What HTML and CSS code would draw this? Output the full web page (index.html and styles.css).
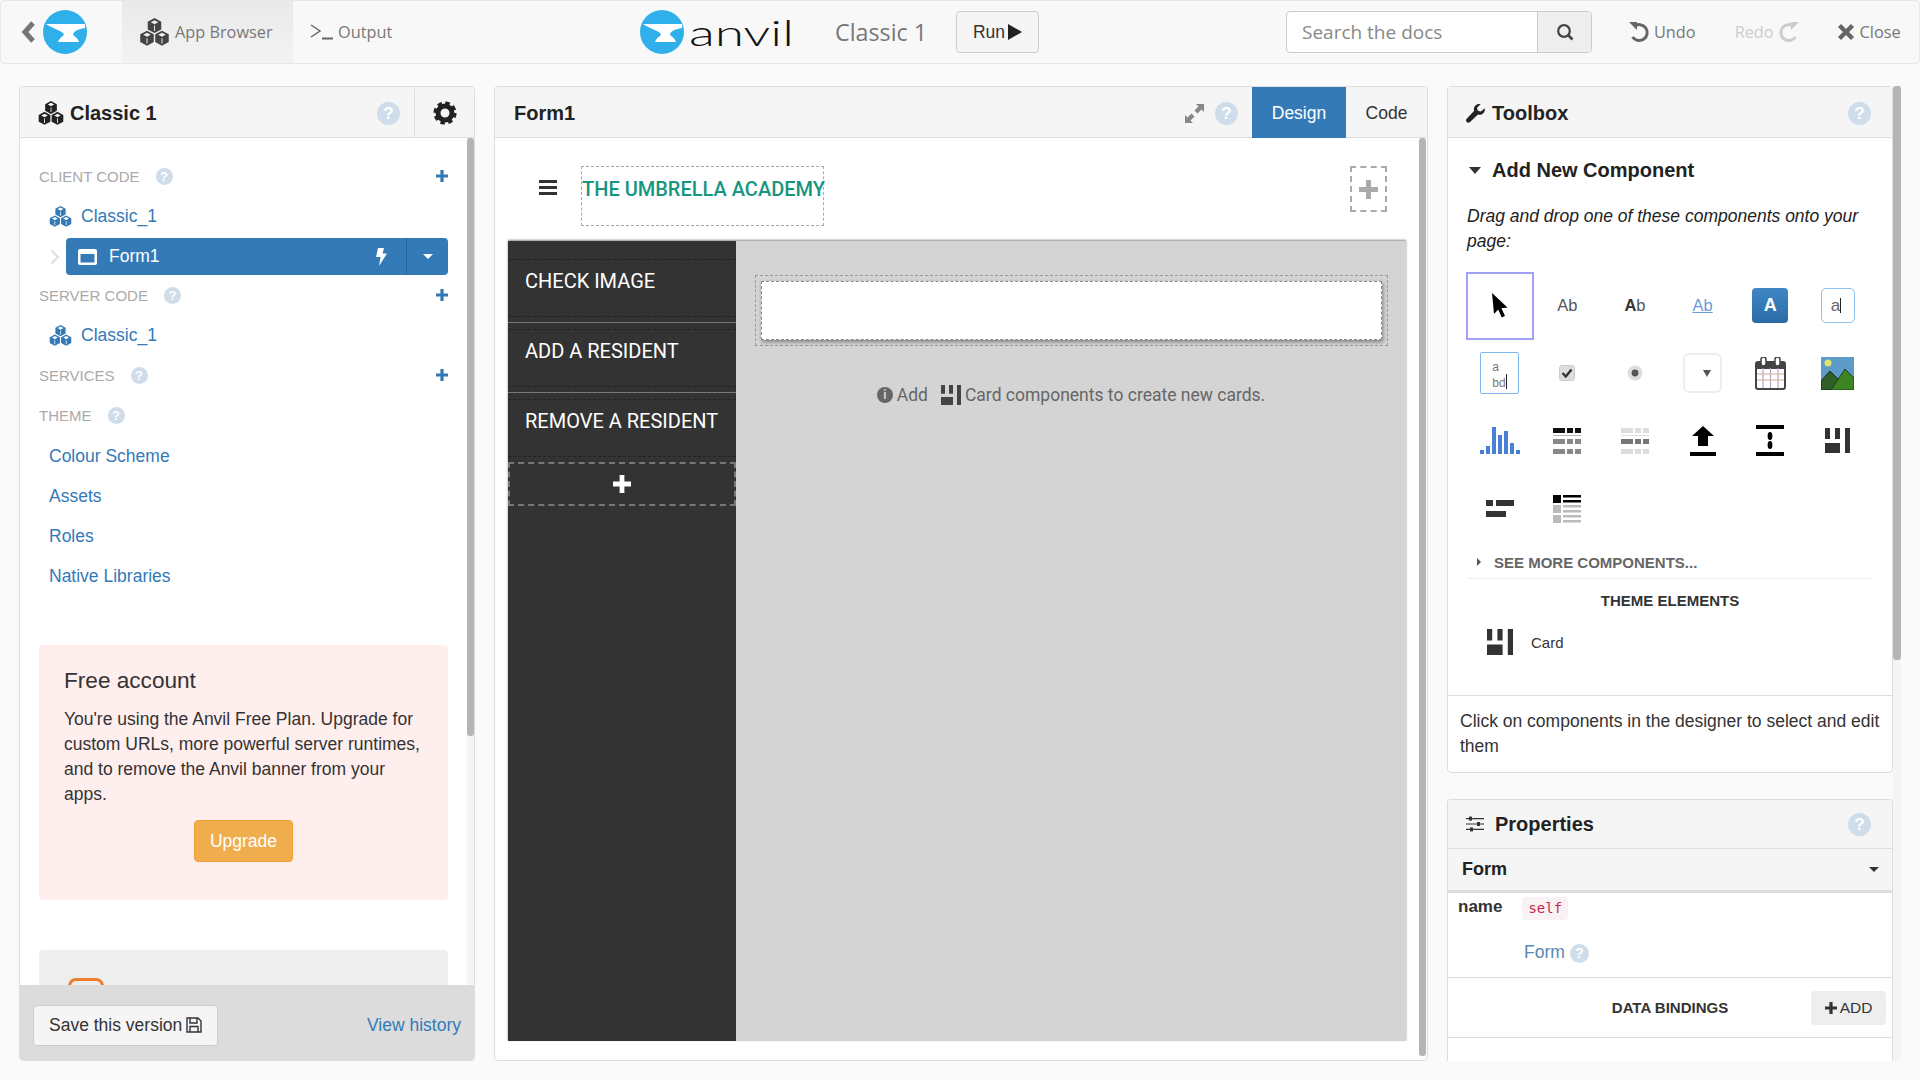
FILE: index.html
```html
<!DOCTYPE html>
<html>
<head>
<meta name="viewport" content="width=device-width, initial-scale=1">
<title>Anvil Editor</title>
<link rel="stylesheet" href="styles.css">
</head>
<body>

<svg class="defs" width="0" height="0">
  <symbol id="i-cubes" viewBox="0 0 24 23">
    <path id="cube" fill-rule="evenodd" d="M12 0L17.6 3V9.4L12 12.4L6.4 9.4V3ZM12 1.7L8.9 3.4L12 5.1L15.1 3.4ZM11.6 6.2V10.6H12.4V6.2Z"/>
    <use href="#cube" x="-6.2" y="10.4"/>
    <use href="#cube" x="6.2" y="10.4"/>
  </symbol>
  <symbol id="i-anvil" viewBox="0 0 44 44">
    <circle cx="22" cy="22" r="22" fill="#2fb0ea"/>
    <path fill="#fff" d="M3 14H42V18C36 19 31 21 30 24L31 26C33 27 35 29 36 32H15C16 29 18 27 20 26L21 24C18 20 10 19 3 14Z"/>
  </symbol>
  <symbol id="i-plus" viewBox="0 0 12 12">
    <path d="M4.4 0H7.6V4.4H12V7.6H7.6V12H4.4V7.6H0V4.4H4.4Z"/>
  </symbol>
  <symbol id="i-card" viewBox="0 0 25 25">
    <path d="M0 0H5V11H0ZM10 0H15V11H10ZM0 15H15V25H0ZM20 0H25V25H20Z"/>
  </symbol>
</svg>

<header class="topbar">
  <a class="back">
    <svg width="14" height="24" viewBox="0 0 14 24"><path d="M12 3L4 12L12 21" fill="none" stroke="#777" stroke-width="5"/></svg>
    <svg class="back-logo" width="44" height="44"><use href="#i-anvil"/></svg>
  </a>
  <a class="tab tab-active">
    <svg class="tab-cubes" width="29" height="28"><use href="#i-cubes"/></svg>
    App Browser
  </a>
  <a class="tab tab-output">
    <svg width="24" height="16" viewBox="0 0 24 16"><path d="M1 1L10 7L1 13" fill="none" stroke="#666" stroke-width="1.5"/><path d="M12 14.5H23" stroke="#666" stroke-width="2"/></svg>
    Output
  </a>
  <div class="brand">
    <svg width="44" height="44"><use href="#i-anvil"/></svg>
    <span class="wordmark">anvil</span>
  </div>
  <div class="app-name">Classic 1</div>
  <button class="run-btn">Run
    <svg width="14" height="16" viewBox="0 0 14 16"><path d="M0 0L14 8L0 16Z" fill="#222"/></svg>
  </button>
  <div class="search">
    <span class="search-input">Search the docs</span>
    <span class="search-btn">
      <svg width="18" height="18" viewBox="0 0 18 18"><circle cx="8" cy="8" r="5.8" fill="none" stroke="#444" stroke-width="2.2"/><path d="M12 12L16.5 16.5" stroke="#444" stroke-width="2.6"/></svg>
    </span>
  </div>
  <a class="tool tool-undo">
    <svg width="22" height="22" viewBox="0 0 22 22"><path d="M6 5.5A8 8 0 1 1 4.5 16" fill="none" stroke="#666" stroke-width="3"/><path d="M1 1H9V9Z" fill="#666"/></svg>
    Undo
  </a>
  <a class="tool tool-redo">
    Redo
    <svg width="22" height="22" viewBox="0 0 22 22"><path d="M16 5.5A8 8 0 1 0 17.5 16" fill="none" stroke="#ccc" stroke-width="3"/><path d="M21 1H13V9Z" fill="#ccc"/></svg>
  </a>
  <a class="tool tool-close">
    <svg width="18" height="18" viewBox="0 0 18 18"><path d="M2.5 2.5L15.5 15.5M15.5 2.5L2.5 15.5" stroke="#666" stroke-width="4.4"/></svg>
    Close
  </a>
</header>

<main class="workspace">

  <!-- app browser -->
  <section class="panel panel-left">
    <div class="panel-head">
      <svg class="head-cubes" width="26" height="24"><use href="#i-cubes"/></svg>
      <span class="head-title">Classic 1</span>
      <span class="help help-big help-push">?</span>
      <span class="gear-box">
        <svg width="24" height="24" viewBox="0 0 24 24"><circle cx="12" cy="12" r="7" fill="none" stroke="#222" stroke-width="5"/><circle cx="12" cy="12" r="9.6" fill="none" stroke="#222" stroke-width="4" stroke-dasharray="4.3 3.24"/></svg>
      </span>
    </div>
    <div class="scroll-row left-scroll">
      <div class="left-body">
        <div class="sec-row sec-first">CLIENT CODE <span class="help help-small">?</span><svg class="sec-plus" width="12" height="12"><use href="#i-plus"/></svg></div>
        <a class="file-row"><svg width="23" height="21"><use href="#i-cubes"/></svg>Classic_1</a>
        <div class="form-line">
          <svg class="form-chev" width="10" height="16" viewBox="0 0 10 16"><path d="M1.5 1.5L8 8L1.5 14.5" fill="none" stroke="#ddd" stroke-width="2"/></svg>
          <a class="form-pill">
            <svg width="19" height="16" viewBox="0 0 19 16"><path fill="#fff" fill-rule="evenodd" d="M2 0H17A2 2 0 0 1 19 2V14A2 2 0 0 1 17 16H2A2 2 0 0 1 0 14V2A2 2 0 0 1 2 0ZM2.5 5V13.5H16.5V5Z"/></svg>
            <span class="pill-name">Form1</span>
            <svg class="pill-bolt" width="11" height="18" viewBox="0 0 11 18"><path fill="#fff" d="M2 0H8L6.6 5.5H11L3 18L4.6 9H0Z"/></svg>
            <span class="pill-drop"><i class="caret caret-white"></i></span>
          </a>
        </div>
        <div class="sec-row">SERVER CODE <span class="help help-small">?</span><svg class="sec-plus" width="12" height="12"><use href="#i-plus"/></svg></div>
        <a class="file-row"><svg width="23" height="21"><use href="#i-cubes"/></svg>Classic_1</a>
        <div class="sec-row">SERVICES <span class="help help-small">?</span><svg class="sec-plus" width="12" height="12"><use href="#i-plus"/></svg></div>
        <div class="sec-row">THEME <span class="help help-small">?</span></div>
        <a class="theme-row">Colour Scheme</a>
        <a class="theme-row">Assets</a>
        <a class="theme-row">Roles</a>
        <a class="theme-row">Native Libraries</a>

        <div class="promo">
          <h3>Free account</h3>
          <p>You're using the Anvil Free Plan. Upgrade for custom URLs, more powerful server runtimes, and to remove the Anvil banner from your apps.</p>
          <button class="upgrade">Upgrade</button>
        </div>
        <div class="promo-grey"><span class="orange-bit"></span></div>
      </div>
      <div class="scrollbar"><div class="thumb left-thumb"></div></div>
    </div>
    <div class="left-foot">
      <button class="save-btn">Save this version
        <svg width="16" height="16" viewBox="0 0 16 16"><path fill="none" stroke="#333" stroke-width="1.4" d="M1 1H12L15 4V15H1ZM4 1V6H11V1M4 15V9.5H12V15"/></svg>
      </button>
      <a class="history">View history</a>
    </div>
  </section>

  <!-- designer -->
  <section class="panel panel-mid">
    <div class="panel-head">
      <span class="head-title head-form">Form1</span>
      <svg class="expand" width="19" height="19" viewBox="0 0 19 19"><path fill="#888" d="M11 0H19V8L16.500 5.500L12.500 9.500L9.500 6.500L13.500 2.500ZM8 19H0V11L2.500 13.500L6.500 9.500L9.500 12.500L5.500 16.500Z"/></svg>
      <span class="help help-big help-form">?</span>
      <a class="mode mode-on">Design</a>
      <a class="mode">Code</a>
    </div>
    <div class="scroll-row">
      <div class="form-wrap">
        <div class="form-top">
          <div class="burger"><i></i><i></i><i></i></div>
          <div class="form-title">THE UMBRELLA ACADEMY</div>
          <div class="top-slot"><svg width="19" height="19" fill="#aaa"><use href="#i-plus"/></svg></div>
        </div>
        <div class="form-main">
          <nav class="sidenav">
            <div class="nav-slot"><a class="nav-link">CHECK IMAGE</a></div>
            <div class="nav-slot"><a class="nav-link">ADD A RESIDENT</a></div>
            <div class="nav-slot nav-last"><a class="nav-link">REMOVE A RESIDENT</a></div>
            <div class="nav-add"><svg width="18" height="18" fill="#fff"><use href="#i-plus"/></svg></div>
          </nav>
          <div class="stage">
            <div class="card-slot"><div class="card-box"></div></div>
            <div class="hint">
              <span class="info">i</span> Add
              <svg class="hint-card" width="20" height="20" fill="#444"><use href="#i-card"/></svg>
              Card components to create new cards.
            </div>
          </div>
        </div>
      </div>
      <div class="scrollbar scrollbar-mid"><div class="thumb mid-thumb"></div></div>
    </div>
  </section>

  <!-- toolbox and properties -->
  <div class="right-col">
    <div class="right-stack">
      <section class="panel panel-tools">
        <div class="panel-head">
          <svg class="wrench" width="19" height="19" viewBox="0 0 19 19"><path fill="#222" d="M18.6 4.2L15 7.6L11.8 6.8L11 3.8L14.6.2C11.8-.6 8.6 1 8 4C7.8 5 7.9 6 8.2 6.8L.7 14.8C-.2 15.8-.2 17.2.7 18.1C1.7 19.1 3.1 19 4 18.1L12 10.4C15.4 11.6 19.8 8.6 18.6 4.2Z"/></svg>
          <span class="head-title">Toolbox</span>
          <span class="help help-big help-push help-tools">?</span>
        </div>
        <div class="tools-body">
          <div class="add-title"><i class="caret caret-dark"></i>Add New Component</div>
          <p class="drag-note">Drag and drop one of these components onto your page:</p>
          <div class="comp-grid">
            <div class="comp comp-picked"><svg width="16" height="25" viewBox="0 0 16 25"><path d="M0 0L15.5 14.5L9.4 15.2L13 23L9.8 24.5L6.2 16.6L2 21Z"/></svg></div>
            <div class="comp comp-ab">Ab</div>
            <div class="comp comp-ab"><b>A</b>b</div>
            <div class="comp comp-ab comp-link">Ab</div>
            <div class="comp"><span class="mini-btn">A</span></div>
            <div class="comp"><span class="mini-input">a</span></div>

            <div class="comp"><span class="mini-area">a<br>bd</span></div>
            <div class="comp"><svg width="16" height="16" viewBox="0 0 16 16"><rect x=".5" y=".5" width="15" height="15" rx="2.5" fill="#ddd" stroke="#ccc"/><path d="M3.5 8L6.8 11.5L12.5 4.5" fill="none" stroke="#333" stroke-width="2.4"/></svg></div>
            <div class="comp"><svg width="16" height="16" viewBox="0 0 16 16"><circle cx="8" cy="8" r="7.5" fill="#ddd"/><circle cx="8" cy="8" r="3.4" fill="#555"/></svg></div>
            <div class="comp"><span class="mini-drop"><i></i></span></div>
            <div class="comp"><svg width="31" height="33" viewBox="0 0 31 33"><rect x="1" y="5" width="29" height="27" rx="2" fill="#fff" stroke="#444" stroke-width="2"/><rect x="1" y="5" width="29" height="7" fill="#444"/><path d="M8 11V31M15.500 11V31M23 11V31" stroke="#b9a6c9" stroke-width="1.2"/><path d="M2 17H29M2 23H29" stroke="#c9b08f" stroke-width="1.2"/><rect x="6" y="0" width="5" height="9" rx="2.500" fill="#fff" stroke="#444" stroke-width="1.500"/><rect x="20" y="0" width="5" height="9" rx="2.500" fill="#fff" stroke="#444" stroke-width="1.500"/></svg></div>
            <div class="comp"><svg width="33" height="33" viewBox="0 0 33 33"><rect width="33" height="33" fill="#5d9cc9"/><circle cx="7" cy="6" r="3.500" fill="#dfe56a"/><path d="M0 24L9 14L19 24V33H0Z" fill="#2f5f25" stroke="#182f12"/><path d="M10 33L24 12L33 21V33Z" fill="#3d8423" stroke="#1f3f15"/></svg></div>

            <div class="comp"><svg width="40" height="27" viewBox="0 0 40 27" fill="#4a7fd8"><path d="M0 23H4V27H0ZM6 19H10V27H6ZM12 0H16V27H12ZM18 8H22V27H18ZM24 4H28V27H24ZM30 16H34V27H30ZM36 23H40V27H36Z"/></svg></div>
            <div class="comp"><svg width="28" height="28" viewBox="0 0 28 28"><path fill="#111" d="M0 1H12V6H0ZM14 1H20V6H14ZM22 1H28V6H22Z"/><path stroke="#bbb" d="M0 8.500H28"/><path fill="#888" d="M0 12H12V17H0ZM14 12H20V17H14ZM22 12H28V17H22ZM0 22H12V27H0ZM14 22H20V27H14ZM22 22H28V27H22Z"/></svg></div>
            <div class="comp"><svg width="28" height="28" viewBox="0 0 28 28"><path fill="#ddd" d="M0 1H12V6H0ZM14 1H20V6H14ZM22 1H28V6H22ZM0 22H12V27H0ZM14 22H20V27H14ZM22 22H28V27H22Z"/><path stroke="#ddd" d="M0 8.500H28"/><path fill="#777" d="M0 12H12V17H0ZM14 12H20V17H14ZM22 12H28V17H22Z"/></svg></div>
            <div class="comp"><svg width="26" height="30" viewBox="0 0 26 30"><path d="M13 0L24 10H18V20H8V10H2ZM0 26H26V30H0Z"/></svg></div>
            <div class="comp"><svg width="28" height="31" viewBox="0 0 28 31"><path d="M0 0H28V4H0ZM0 27H28V31H0Z"/><ellipse cx="14" cy="11" rx="2.400" ry="4"/><ellipse cx="14" cy="20" rx="2.400" ry="4"/></svg></div>
            <div class="comp"><svg width="25" height="25" fill="#333"><use href="#i-card"/></svg></div>

            <div class="comp"><svg width="28" height="18" viewBox="0 0 28 18" fill="#333"><path d="M0 0H7V6H0ZM10 0H28V6H10ZM0 11H20V17H0Z"/></svg></div>
            <div class="comp"><svg width="28" height="28" viewBox="0 0 28 28"><path d="M0 0H8V8H0ZM10 0H28V2.500H10ZM10 5H28V7.500H10Z"/><path fill="#bbb" d="M0 10H8V18H0ZM10 10H28V12.500H10ZM10 15H28V17.500H10ZM0 20H8V28H0ZM10 20H28V22.500H10ZM10 25H28V27.500H10Z"/></svg></div>
          </div>
          <div class="see-more"><i class="caret-side"></i>SEE MORE COMPONENTS...</div>
          <div class="theme-head">THEME ELEMENTS</div>
          <div class="theme-item"><svg width="26" height="26" fill="#333"><use href="#i-card"/></svg><span>Card</span></div>
        </div>
        <div class="tools-tip">Click on components in the designer to select and edit them</div>
      </section>

      <section class="panel panel-props">
        <div class="props-head">
          <svg width="18" height="16" viewBox="0 0 18 16" fill="#333"><path d="M0 2H18V3.200H0ZM0 7.400H18V8.600H0ZM0 12.800H18V14H0Z"/><rect x="3" y="0.600" width="3" height="4"/><rect x="11" y="6" width="3" height="4"/><rect x="4" y="11.400" width="3" height="4"/></svg>
          <span class="props-title">Properties</span>
          <span class="help help-big help-push help-props">?</span>
        </div>
        <div class="props-select">Form<i class="caret caret-dark caret-push"></i></div>
        <div class="props-name">
          <div class="name-line"><b>name</b><code>self</code></div>
          <div class="form-link">Form <span class="help help-form-link">?</span></div>
        </div>
        <div class="bindings">
          <span></span>
          <b>DATA BINDINGS</b>
          <a class="add-btn"><svg width="12" height="12" fill="#333"><use href="#i-plus"/></svg>ADD</a>
        </div>
      </section>
    </div>
    <div class="scrollbar scrollbar-right"><div class="thumb right-thumb"></div></div>
  </div>

</main>

</body>
</html>
```

FILE: styles.css
```css
* {
  box-sizing: border-box;
}

html, body {
  height: 100%;
}

body {
  margin: 0;
  overflow: hidden;
  background: #fafafa;
  color: #333;
  font-family: "Liberation Sans", Arial, sans-serif;
  font-size: 17.5px;
}

.defs {
  display: block;
}

svg {
  flex: none;
}

/* Top bar */
.topbar {
  display: flex;
  align-items: center;
  height: 64px;
  background: #f8f8f8;
  border: 1px solid #e7e7e7;
  border-radius: 4px;
  font-family: "Open Sans", sans-serif;
  color: #777;
}

.back {
  display: flex;
  align-items: center;
  width: 121px;
  padding-left: 20px;
}

.back-logo {
  margin-left: 8px;
}

.tab {
  display: flex;
  align-items: center;
  height: 62px;
  font-size: 16.3px;
}

.tab-active {
  width: 171px;
  padding-left: 18px;
  gap: 6px;
  background: linear-gradient(#e9e9e9, #f3f3f3);
}

.tab-cubes {
  fill: #444;
}

.tab-output {
  width: 347px;
  padding-left: 17px;
  gap: 4px;
}

.brand {
  display: flex;
  align-items: center;
  width: 195px;
  gap: 5px;
}

.wordmark {
  display: inline-block;
  font-family: "Lato", sans-serif;
  font-weight: 300;
  font-size: 36px;
  line-height: 44px;
  color: #111;
  transform: scaleX(1.48);
  transform-origin: left center;
}

.app-name {
  width: 121px;
  font-size: 23.3px;
  color: #777;
}

.run-btn {
  display: flex;
  align-items: center;
  justify-content: center;
  gap: 3px;
  width: 83px;
  height: 42px;
  padding: 0;
  background: #f5f5f5;
  border: 1px solid #ccc;
  border-radius: 4px;
  color: #333;
  font-family: "Liberation Sans", Arial, sans-serif;
  font-size: 17.5px;
}

.search {
  display: flex;
  width: 306px;
  height: 42px;
  margin-left: 247px;
  border: 1px solid #ccc;
  border-radius: 4px;
  background: #fff;
  overflow: hidden;
}

.search-input {
  flex: 1;
  padding-left: 15px;
  line-height: 40px;
  font-size: 19px;
  color: #888;
}

.search-btn {
  display: flex;
  align-items: center;
  justify-content: center;
  width: 54px;
  background: #eee;
  border-left: 1px solid #ccc;
}

.tool {
  display: flex;
  align-items: center;
  gap: 4px;
  font-size: 16.3px;
}

.tool-undo {
  margin-left: 36px;
}

.tool-redo {
  margin-left: 39px;
  color: #ccc;
}

.tool-close {
  margin-left: 37px;
  gap: 5px;
}

/* Panels */
.workspace {
  display: flex;
  align-items: flex-start;
  gap: 19px;
  padding: 22px 0 0 19px;
}

.panel {
  display: flex;
  flex-direction: column;
  background: #fff;
  border: 1px solid #ddd;
  border-radius: 4px;
}

.panel-left {
  width: 456px;
  height: 975px;
  overflow: hidden;
}

.panel-mid {
  width: 934px;
  height: 975px;
  overflow: hidden;
}

.panel-head {
  display: flex;
  flex: none;
  align-items: center;
  height: 51px;
  background: #f5f5f5;
  border-bottom: 1px solid #ddd;
  padding: 2px 0 0 18px;
}

.head-cubes {
  margin-right: 6px;
  fill: #222;
}

.head-title {
  font-weight: bold;
  font-size: 20px;
  color: #222;
}

.help {
  display: inline-block;
  border-radius: 50%;
  background: #cfddeb;
  color: #fff;
  font-weight: bold;
  text-align: center;
}

.help-big {
  width: 23px;
  height: 23px;
  line-height: 23px;
  font-size: 17px;
}

.help-small {
  width: 17px;
  height: 17px;
  line-height: 17px;
  font-size: 13px;
  margin-left: 16px;
  vertical-align: middle;
}

.help-push {
  margin-left: auto;
}

.gear-box {
  display: flex;
  align-items: center;
  justify-content: center;
  width: 60px;
  height: 49px;
  margin-left: 14px;
  border-left: 1px solid #ddd;
}

.scroll-row {
  display: flex;
  flex: 1;
  min-height: 0;
}

.scrollbar {
  flex: none;
  width: 7px;
  background: #f5f5f5;
}

.thumb {
  background: #b5b5b5;
  border-radius: 3px;
}

/* App browser */
.left-body {
  flex: 1;
  min-width: 0;
  padding: 18px 19px 0 19px;
  overflow: hidden;
}

.sec-row {
  display: flex;
  align-items: center;
  height: 40px;
  font-size: 15px;
  color: #aaa;
}

.sec-plus {
  margin-left: auto;
  fill: #337ab7;
}

.file-row {
  display: flex;
  align-items: center;
  height: 40px;
  padding-left: 10px;
  gap: 9px;
  color: #337ab7;
}

.file-row svg {
  fill: #337ab7;
}

.form-line {
  display: flex;
  align-items: center;
  margin-top: 2px;
  padding-left: 11px;
  height: 37px;
}

.form-chev {
  margin-right: 6px;
}

.form-pill {
  display: flex;
  align-items: center;
  flex: 1;
  height: 37px;
  padding-left: 12px;
  background: #337ab7;
  border-radius: 4px;
  color: #fff;
}

.pill-name {
  margin-left: 12px;
}

.pill-bolt {
  margin-left: auto;
  margin-right: 19px;
}

.pill-drop {
  display: flex;
  align-items: center;
  justify-content: center;
  width: 42px;
  height: 37px;
  border-left: 1px solid #2a6496;
}

.caret {
  display: inline-block;
  border-left: 5px solid transparent;
  border-right: 5px solid transparent;
  border-top: 5px solid #fff;
}

.caret-dark {
  border-top-color: #333;
}

.theme-row {
  display: block;
  height: 40px;
  line-height: 42px;
  padding-left: 10px;
  color: #337ab7;
}

.promo {
  height: 255px;
  margin-top: 50px;
  padding: 21px 25px 0;
  background: #ffeeee;
  border-radius: 4px;
}

.promo h3 {
  margin: 0;
  font-size: 22.6px;
  font-weight: normal;
  line-height: 30px;
}

.promo p {
  margin: 11px 0 0;
  line-height: 25px;
}

.upgrade {
  display: block;
  width: 99px;
  height: 42px;
  margin: 13px auto 0;
  background: #f0ad4e;
  border: 1px solid #eea236;
  border-radius: 4px;
  color: #fff;
  font: inherit;
}

.promo-grey {
  height: 120px;
  margin-top: 50px;
  padding: 28px 0 0 29px;
  background: #eee;
  border-radius: 4px;
}

.orange-bit {
  display: block;
  width: 36px;
  height: 36px;
  border: 3px solid #ed7d31;
  border-radius: 8px;
}

.left-thumb {
  height: 598px;
}

.left-foot {
  display: flex;
  flex: none;
  align-items: center;
  justify-content: space-between;
  height: 75px;
  padding: 5px 13px 0 13px;
  background: #dcdcdc;
}

.save-btn {
  display: flex;
  align-items: center;
  gap: 4px;
  width: 185px;
  height: 41px;
  padding-left: 15px;
  background: #f5f5f5;
  border: 1px solid #ccc;
  border-radius: 4px;
  color: #333;
  font: inherit;
}

.history {
  color: #337ab7;
}

/* Designer */
.head-form {
  margin-right: auto;
  margin-left: 1px;
}

.expand {
  margin-right: 11px;
}

.help-form {
  margin-right: 14px;
}

.mode {
  display: block;
  width: 81px;
  height: 51px;
  margin-top: -2px;
  line-height: 52px;
  text-align: center;
  color: #333;
}

.mode-on {
  width: 94px;
  background: #337ab7;
  color: #fff;
}

.form-wrap {
  flex: 1;
  min-width: 0;
  padding: 0 13px 0 13px;
}

.scrollbar-mid {
  margin-right: 1px;
  background: #fff;
}

.mid-thumb {
  height: 918px;
}

.form-top {
  display: flex;
  align-items: flex-start;
  height: 103px;
}

.burger {
  width: 18px;
  margin: 42px 0 0 31px;
}

.burger i {
  display: block;
  height: 3px;
  margin-bottom: 3px;
  background: #333;
}

.form-title {
  width: 243px;
  height: 60px;
  margin: 28px 0 0 24px;
  padding-top: 9px;
  border: 1px dashed #aaa;
  font-family: Roboto, sans-serif;
  font-weight: 500;
  font-size: 20px;
  line-height: 26px;
  white-space: nowrap;
  color: #16967f;
}

.top-slot {
  display: flex;
  align-items: center;
  justify-content: center;
  width: 37px;
  height: 46px;
  margin: 28px 19px 0 auto;
  border: 2px dashed #aaa;
}

.form-main {
  display: flex;
  height: 800px;
  box-shadow: 0 -1px 2px rgba(0, 0, 0, .45);
  font-family: Roboto, sans-serif;
}

.sidenav {
  flex: none;
  width: 228px;
  padding-top: 12px;
  background: #333;
}

.nav-slot {
  padding: 6px 0 5px;
  border-bottom: 1px solid #777;
}

.nav-last {
  border-bottom: 0;
}

.nav-link {
  display: block;
  height: 58px;
  padding: 9px 0 0 17px;
  border-top: 1px dashed #222;
  border-bottom: 1px dashed #222;
  font-size: 20px;
  line-height: 24px;
  color: #fff;
}

.nav-add {
  display: flex;
  align-items: center;
  justify-content: center;
  height: 44px;
  border: 2px dashed #777;
}

.stage {
  flex: 1;
  background: #d4d4d4;
}

.card-slot {
  height: 71px;
  margin: 34px 18px 0 19px;
  padding: 5px;
  border: 1px dashed #999;
}

.card-box {
  height: 59px;
  background: #fff;
  border: 1px dashed #888;
  box-shadow: 1px 2px 4px rgba(0, 0, 0, .4);
}

.hint {
  display: flex;
  align-items: center;
  justify-content: center;
  margin-top: 37px;
  height: 24px;
  font-size: 17.5px;
  color: #666;
  gap: 4px;
}

.info {
  width: 16px;
  height: 16px;
  line-height: 16px;
  border-radius: 50%;
  background: #666;
  color: #d4d4d4;
  font-size: 12px;
  font-weight: bold;
  text-align: center;
}

.hint-card {
  margin-left: 9px;
}

/* Toolbox */
.right-col {
  display: flex;
  flex: none;
  width: 454px;
  height: 975px;
}

.right-stack {
  display: flex;
  flex-direction: column;
  width: 447px;
  gap: 26px;
}

.scrollbar-right {
  width: 8px;
}

.right-thumb {
  height: 574px;
}

.panel-tools {
  flex: none;
  height: 687px;
}

.wrench {
  margin-right: 7px;
}

.help-tools {
  margin-right: 21px;
}

.tools-body {
  flex: 1;
  padding: 12px 19px 0;
}

.add-title {
  display: flex;
  align-items: center;
  height: 40px;
  font-weight: bold;
  font-size: 20px;
  color: #222;
}

.add-title .caret {
  margin-left: 2px;
  margin-right: 11px;
  border-width: 7px 6px 0;
  border-top-color: #333;
}

.drag-note {
  margin: 14px 0 0;
  font-style: italic;
  line-height: 25px;
  color: #222;
}

.comp-grid {
  display: grid;
  grid-template-columns: repeat(6, 67.6px);
  grid-auto-rows: 67.6px;
  margin: 18px 0 0 -1px;
}

.comp {
  display: flex;
  align-items: center;
  justify-content: center;
}

.comp-picked {
  border: 2px solid #a0a0f5;
}

.comp-ab {
  font-size: 16.500px;
  color: #555;
}

.comp-ab b {
  color: #333;
}

.comp-link {
  color: #6a9bd8;
  text-decoration: underline;
}

.mini-btn {
  width: 36px;
  height: 35px;
  line-height: 35px;
  text-align: center;
  border-radius: 4px;
  background: linear-gradient(#3f87c4, #2a6ba6);
  color: #fff;
  font-weight: bold;
  font-size: 18px;
}

.mini-input {
  width: 34px;
  height: 35px;
  line-height: 33px;
  padding-left: 9px;
  border: 1px solid #8cc0ee;
  border-radius: 5px;
  color: #666;
  font-size: 17px;
}

.mini-input:after, .mini-area:after {
  content: "";
  display: inline-block;
  width: 1px;
  height: 15px;
  vertical-align: -2px;
  background: #222;
}

.mini-area {
  width: 39px;
  height: 42px;
  padding: 7px 0 0 11px;
  border: 1px solid #7fb8ec;
  border-radius: 2px;
  color: #777;
  font-size: 12px;
  line-height: 14px;
}

.mini-drop {
  display: flex;
  align-items: center;
  justify-content: flex-end;
  width: 39px;
  height: 40px;
  padding-right: 9px;
  border: 2px solid #eee;
  border-radius: 6px;
}

.mini-drop i {
  border-left: 4px solid transparent;
  border-right: 4px solid transparent;
  border-top: 7px solid #555;
}

.see-more {
  display: flex;
  align-items: center;
  height: 31px;
  margin-top: 6px;
  padding: 0 0 2px 10px;
  border-bottom: 1px solid #eee;
  font-weight: bold;
  font-size: 15px;
  color: #666;
}

.caret-side {
  margin-right: 13px;
  border-top: 4px solid transparent;
  border-bottom: 4px solid transparent;
  border-left: 4px solid #555;
}

.theme-head {
  height: 40px;
  line-height: 43px;
  text-align: center;
  font-weight: bold;
  font-size: 15px;
  color: #333;
}

.theme-item {
  display: flex;
  align-items: center;
  height: 46px;
  padding-left: 20px;
  gap: 18px;
  font-size: 15px;
}

.tools-tip {
  flex: none;
  height: 77px;
  padding: 13px 12px 0;
  border-top: 1px solid #ddd;
  line-height: 25px;
}

/* Properties */
.panel-props {
  flex: 1;
  min-height: 0;
  border-bottom: 0;
  border-radius: 4px 4px 0 0;
  overflow: hidden;
}

.props-head {
  display: flex;
  flex: none;
  align-items: center;
  height: 49px;
  padding-left: 18px;
  background: #f5f5f5;
  border-bottom: 1px solid #ddd;
}

.props-title {
  margin-left: 11px;
  font-weight: bold;
  font-size: 20px;
  color: #222;
}

.help-props {
  margin-right: 21px;
}

.props-select {
  display: flex;
  flex: none;
  align-items: center;
  height: 44px;
  padding: 0 13px 0 14px;
  background: #f5f5f5;
  border-bottom: 3px solid #ddd;
  font-weight: bold;
  font-size: 18px;
  color: #222;
}

.caret-push {
  margin-left: auto;
}

.props-name {
  flex: none;
  height: 85px;
  border-bottom: 1px solid #ddd;
}

.name-line {
  display: flex;
  align-items: flex-start;
  padding: 3px 0 0 10px;
  gap: 20px;
}

.name-line b {
  line-height: 22px;
  font-size: 17px;
}

.name-line code {
  padding: 2px 6px;
  margin-top: 1px;
  border-radius: 4px;
  background: #f9f2f4;
  color: #c7254e;
  font-family: "DejaVu Sans Mono", monospace;
  font-size: 14px;
  line-height: 19px;
}

.form-link {
  margin: 22px 0 0 76px;
  color: #5a86b3;
}

.help-form-link {
  width: 19px;
  height: 19px;
  line-height: 19px;
  font-size: 14px;
  vertical-align: 0;
}

.bindings {
  display: grid;
  flex: none;
  grid-template-columns: 1fr auto 1fr;
  align-items: center;
  height: 60px;
  padding: 0 6px;
  border-bottom: 1px solid #ddd;
  font-size: 15px;
}

.add-btn {
  display: flex;
  align-items: center;
  justify-content: center;
  justify-self: end;
  gap: 3px;
  width: 75px;
  height: 34px;
  background: #eee;
  border-radius: 4px;
  font-size: 15.5px;
}
```
